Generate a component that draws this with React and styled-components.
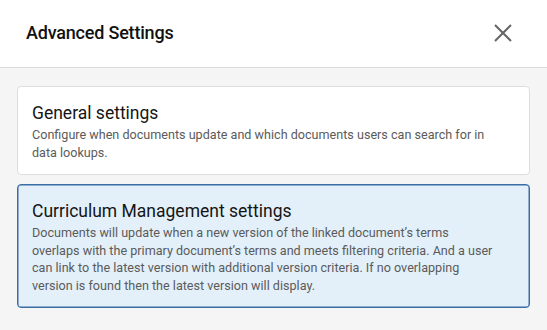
import React from 'react';
import styled, { createGlobalStyle } from 'styled-components';

const GlobalStyle = createGlobalStyle`
  html, body {
    margin: 0;
    padding: 0;
    background: #f5f5f5;
    font-family: Roboto, "Liberation Sans", Arial, sans-serif;
  }
`;

const Modal = styled.div`
  width: 547px;
  height: 330px;
  display: flex;
  flex-direction: column;
  background: #f5f5f5;
  overflow: hidden;
`;

const Header = styled.div`
  height: 68px;
  flex-shrink: 0;
  box-sizing: border-box;
  display: flex;
  align-items: center;
  justify-content: space-between;
  padding: 0 34px 0 26px;
  background: #ffffff;
  border-bottom: 1px solid #dcdcdc;
`;

const Title = styled.h2`
  margin: 0 0 3px;
  font-size: 18px;
  font-weight: 500;
  color: #111111;
  letter-spacing: -0.2px;
`;

const CloseButton = styled.button`
  border: 0;
  background: none;
  padding: 0;
  margin-bottom: 1px;
  width: 20px;
  height: 20px;
  display: flex;
  align-items: center;
  justify-content: center;
  cursor: pointer;
`;

const Body = styled.div`
  display: flex;
  flex-direction: column;
  gap: 9px;
  padding: 18px 17px;
`;

const Card = styled.div`
  border-radius: 4px;
  padding: 14px 34px 13px 14px;
  background: ${props => (props.selected ? '#e3f0fa' : '#ffffff')};
  border: 1px solid ${props => (props.selected ? '#3a6ca6' : '#dedede')};
  box-shadow: ${props => (props.selected ? 'inset 0 0 0 0.5px #3a6ca6' : 'none')};
  cursor: pointer;
`;

const CardTitle = styled.h3`
  margin: 0 0 1px;
  font-size: 17.5px;
  line-height: 24px;
  font-weight: 400;
  color: #151515;
`;

const CardText = styled.p`
  margin: 0;
  font-size: 12.6px;
  line-height: 17.5px;
  color: #5b5b5b;
`;

const settings = [
  {
    title: 'General settings',
    text: 'Configure when documents update and which documents users can search for in data lookups.'
  },
  {
    title: 'Curriculum Management settings',
    text:
      'Documents will update when a new version of the linked document\u2019s terms overlaps with the primary document\u2019s terms and meets filtering criteria. And a user can link to the latest version with additional version criteria. If no overlapping version is found then the latest version will display.',
    selected: true
  }
];

export default function App() {
  return (
    <Modal>
      <GlobalStyle />
      <Header>
        <Title>Advanced Settings</Title>
        <CloseButton aria-label="Close">
          <svg width="20" height="20" viewBox="0 0 20 20">
            <path d="M2 2 L18 18 M18 2 L2 18" stroke="#666666" strokeWidth="2" fill="none" />
          </svg>
        </CloseButton>
      </Header>
      <Body>
        {settings.map(s => (
          <Card key={s.title} selected={s.selected}>
            <CardTitle>{s.title}</CardTitle>
            <CardText>{s.text}</CardText>
          </Card>
        ))}
      </Body>
    </Modal>
  );
}
